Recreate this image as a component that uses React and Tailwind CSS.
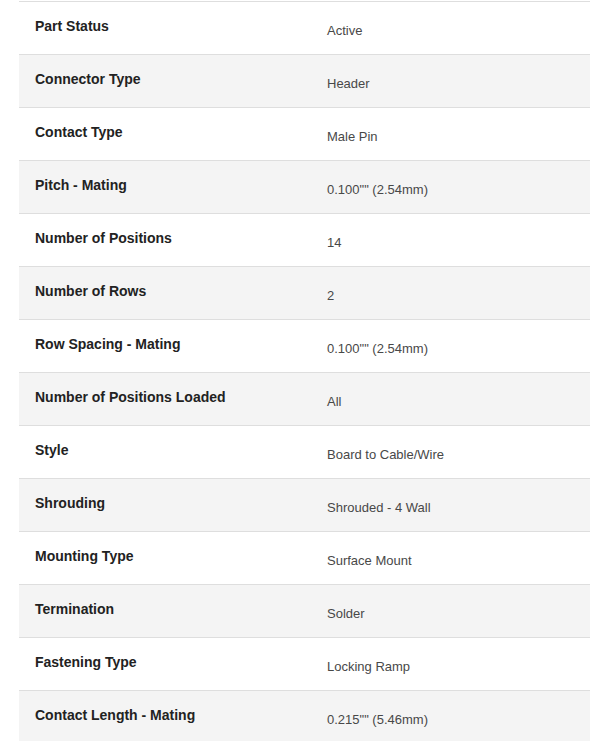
import React from 'react';

const specs = [
  ['Part Status', 'Active'],
  ['Connector Type', 'Header'],
  ['Contact Type', 'Male Pin'],
  ['Pitch - Mating', '0.100"" (2.54mm)'],
  ['Number of Positions', '14'],
  ['Number of Rows', '2'],
  ['Row Spacing - Mating', '0.100"" (2.54mm)'],
  ['Number of Positions Loaded', 'All'],
  ['Style', 'Board to Cable/Wire'],
  ['Shrouding', 'Shrouded - 4 Wall'],
  ['Mounting Type', 'Surface Mount'],
  ['Termination', 'Solder'],
  ['Fastening Type', 'Locking Ramp'],
  ['Contact Length - Mating', '0.215"" (5.46mm)'],
];

const App = () => {
  return (
    <div className="w-[590px] h-[741px] overflow-hidden bg-white pt-px pl-[19px] font-['Liberation_Sans',Arial,sans-serif]">
      {/* Spec rows */}
      <div className="flex flex-col">
        {specs.map(([label, value], index) => (
          <div
            key={index}
            className={`flex h-[53px] border-t border-[#dedede] ${index % 2 === 1 ? 'bg-[#f4f4f4]' : 'bg-white'}`}
          >
            <div className="w-[292px] pl-4 pt-4 text-[14px] leading-[16px] font-bold text-[#222]">{label}</div>
            <div className="flex-1 pl-4 pt-[21px] text-[13px] leading-[16px] text-[#484848]">{value}</div>
          </div>
        ))}
      </div>
    </div>
  );
};

export default App;
